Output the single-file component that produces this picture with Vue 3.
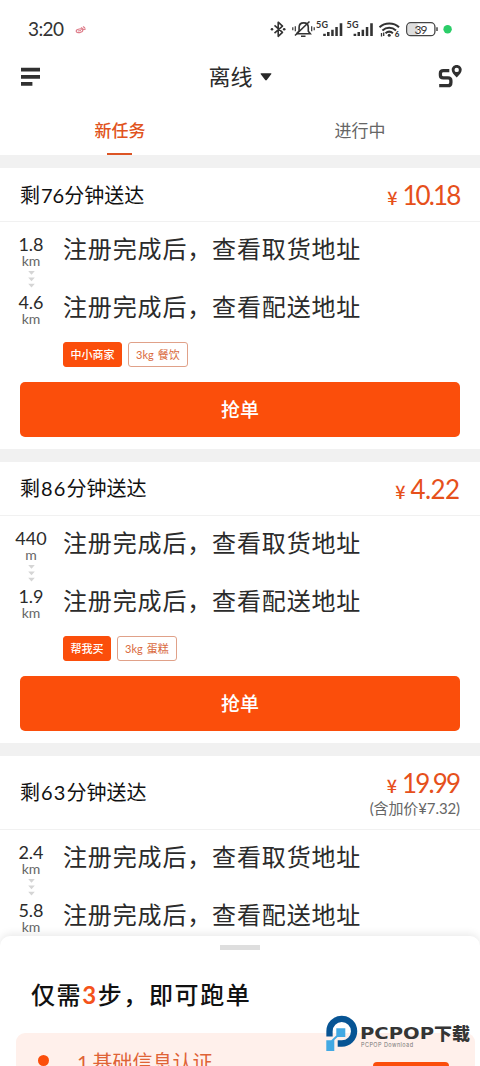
<script setup>
const cards = [
  {
    digits: '76', spacing: '0px', price: '10.18', priceSpacing: '-1.9px',
    stops: [{ n: '1.8', unit: 'km', text: '注册完成后，查看取货地址' }, { n: '4.6', unit: 'km', text: '注册完成后，查看配送地址' }],
    tag: '中小商家', goods: '餐饮',
  },
  {
    digits: '86', spacing: '1.2px', price: '4.22', priceSpacing: '-0.6px',
    stops: [{ n: '440', unit: 'm', text: '注册完成后，查看取货地址' }, { n: '1.9', unit: 'km', text: '注册完成后，查看配送地址' }],
    tag: '帮我买', goods: '蛋糕',
  },
  {
    digits: '63', spacing: '1.2px', price: '19.99', priceSpacing: '-1.8px', extra: '7.32',
    stops: [{ n: '2.4', unit: 'km', text: '注册完成后，查看取货地址' }, { n: '5.8', unit: 'km', text: '注册完成后，查看配送地址' }],
  },
]
</script>

<template>
  <main class="screen">
    <div class="status">
      <span class="time">3:20</span>
      <svg class="doodle" width="12" height="10" viewBox="0 0 12 10" fill="none" stroke="#df7f8c" stroke-width="1.2">
        <ellipse cx="4.5" cy="5.8" rx="3.3" ry="1.8" transform="rotate(-10 4.5 5.8)" />
        <path d="M3 6l3-.5M6 2.5l2.5 2M8 1.5l2 1.5M8.5 4.7l2.2-.8" />
      </svg>
      <svg class="indicators" width="190" height="24" viewBox="0 0 190 24">
        <g fill="none" stroke="#333" stroke-width="1.6" stroke-linejoin="round">
          <path d="M4.5 8.3l8 7-4.3 4V5.2l4.3 4-8 7" />
        </g>
        <circle cx="2" cy="12.2" r="1.3" fill="#333" /><circle cx="14.2" cy="12.2" r="1.3" fill="#333" />
        <g fill="none" stroke="#333" stroke-width="1.6">
          <path d="M26.5 16.8h13.8l-2-2.6V10.5c0-3-1.8-4.6-4.6-4.6-3 0-4.6 1.8-4.6 4.6v3.5l-2.6 2.8M31 19.3h4.5" />
          <path d="M39.5 4.5L25 18.5" />
          <path d="M25.3 9.3v5M22.8 10.3v3M41.7 9.3v5M44.2 10.3v3" stroke-width="1.2" />
        </g>
        <g fill="#333" font-family="Lato, sans-serif" font-weight="700" font-size="9">
          <text x="46" y="10.6" textLength="12">5G</text>
          <text x="76.5" y="10.6" textLength="12">5G</text>
        </g>
        <g fill="#333">
          <path d="M53.2 16.8h2.6v2.2h-2.6zM57 15h2.6v4H57zM61.2 12.8h2.5V19h-2.5zM65.3 10h2.5v9h-2.5zM69.7 6.3h2.6V19h-2.6z" />
          <path d="M83.6 16.8h2.6v2.2h-2.6zM87.5 15h2.5v4h-2.5zM91.6 12.8h2.5V19h-2.5zM95.8 10h2.5v9h-2.5zM100.2 6.3h2.6V19h-2.6z" />
        </g>
        <g fill="none" stroke="#333" stroke-width="2">
          <path d="M109.5 10.3c5.4-5 14.2-5 19.5 0M112.4 13.4c4-3.6 9.7-3.6 13.6 0M115.5 16.3c2.3-2 5.2-2 7.4 0" />
        </g>
        <circle cx="119.2" cy="18.2" r="1.5" fill="#333" />
        <path d="M111.5 16v3.5M113.7 15.5V19" stroke="#333" stroke-width="1.3" />
        <text x="124.8" y="20" font-family="Lato, sans-serif" font-weight="900" font-size="8" fill="#333">6</text>
        <rect x="138" y="6.5" width="10" height="12" rx="2" fill="#dedede" />
        <rect x="136.7" y="5.7" width="28.2" height="13" rx="4" fill="none" stroke="#444" stroke-width="1.3" />
        <path d="M167 10.3v3.8" stroke="#444" stroke-width="1.5" />
        <text x="144.5" y="16.6" textLength="13" font-family="Lato, sans-serif" font-size="12" fill="#333">39</text>
        <circle cx="177.6" cy="12.2" r="4.2" fill="#2bcd68" />
      </svg>
    </div>

    <header class="topbar">
      <svg width="20" height="20" viewBox="0 0 20 20" fill="#303030"><path d="M0 .8h19v3.8H0zM0 7.9h19v3.8H0zM0 14.9h11.4v3.8H0z" /></svg>
      <div class="mode"><span>离线</span>
        <svg width="12" height="8" viewBox="0 0 12 8" fill="#292929"><path d="M1.2.3h9.6q1.2 0 .4 1L6.8 7q-.8.9-1.6 0L.8 1.3Q0 .3 1.2.3z" /></svg>
      </div>
      <svg width="25" height="25" viewBox="0 0 25 25">
        <path d="M11.3 5.7H5.3Q2.4 5.7 2.4 8.3v1.9q0 2.7 2.9 2.7h4.7q2.9 0 2.9 2.9v1.6q0 3.3-3.1 3.3H1.2" fill="none" stroke="#303030" stroke-width="3.3" />
        <path d="M18.7 0c-3 0-5 2.2-5 4.8 0 2.9 2.5 5.1 5 7.8 2.6-2.7 5-4.9 5-7.8 0-2.6-2-4.8-5-4.8zM18.7 2.7a2.2 2.2 0 1 1 0 4.4 2.2 2.2 0 0 1 0-4.4z" fill="#303030" fill-rule="evenodd" />
      </svg>
    </header>

    <nav class="tabs"><span class="tab active">新任务</span><span class="tab">进行中</span></nav>

    <section v-for="card in cards" :key="card.digits" class="card">
      <div class="head" :class="{ tall: card.extra }">
        <div class="deadline">剩<b :style="{ letterSpacing: card.spacing }">{{ card.digits }}</b>分钟送达</div>
        <div class="money">
          <div class="price"><span class="yen">¥</span><span :style="{ letterSpacing: card.priceSpacing }">{{ card.price }}</span></div>
          <div v-if="card.extra" class="extra">(含加价¥{{ card.extra }})</div>
        </div>
      </div>
      <div class="route">
        <div v-for="(stop, i) in card.stops" :key="i" class="stop">
          <div class="distance">
            <div class="num">{{ stop.n }}</div>
            <div class="unit">{{ stop.unit }}</div>
            <svg v-if="i === 0" width="7" height="18" viewBox="0 0 7 18" fill="#d5d5d5"><path d="M.2 1h6.6L3.5 4.8zM.2 7.4h6.6L3.5 11.2zM.2 13.8h6.6L3.5 17.6z" /></svg>
          </div>
          <div class="address">{{ stop.text }}</div>
        </div>
      </div>
      <template v-if="card.tag">
        <div class="tags"><span class="tag solid">{{ card.tag }}</span><span class="tag"><i>3kg</i>{{ card.goods }}</span></div>
        <button class="grab">抢单</button>
      </template>
    </section>

    <section class="sheet">
      <div class="handle"></div>
      <h2>仅需<em>3</em>步，即可跑单</h2>
      <div class="step"><span class="dot"></span><span class="label"><i>1</i>基础信息认证</span><span class="go"></span></div>
      <div class="brand">
        <svg width="32" height="37" viewBox="0 0 32 37">
          <path d="M3.5 21.6V16.3a12.3 12.3 0 1 1 12.2 12.2H11.7" fill="none" stroke="#075494" stroke-width="6.3" />
          <path d="M10.3 13.2h9v8.9h-7.7L8.3 25v11H.3V25.2h5l5-4.7z" fill="#43a9e3" />
        </svg>
        <svg class="wordmark" width="116" height="34" viewBox="0 -10 116 34" font-family="'DejaVu Sans', 'Noto Sans CJK SC', sans-serif">
          <text x="0" y="13.5" textLength="74" lengthAdjust="spacingAndGlyphs" font-size="16" font-weight="700" fill="#353535">PCPOP</text>
          <text x="74" y="14.5" textLength="36" lengthAdjust="spacingAndGlyphs" font-size="17.5" font-weight="900" font-family="'Noto Sans CJK SC', sans-serif" fill="#353535">下载</text>
          <text x="1" y="22" textLength="52" font-size="5.5" font-family="Inter, sans-serif" fill="#777">PCPOP Download</text>
        </svg>
      </div>
    </section>
  </main>
</template>

<style>
body { background: #fff; }
</style>

<style scoped>
* { box-sizing: border-box; }
.screen { position: relative; width: 480px; height: 1066px; overflow: hidden; background: #fff; color: #2b2b2b; font-family: Lato, "Noto Sans CJK SC", sans-serif; }
.status { height: 56px; display: flex; align-items: flex-start; padding: 17px 20px 0 28px; }
.time { width: 47px; font-size: 19px; line-height: 24px; letter-spacing: -.6px; color: #333; }
.doodle { margin-top: 8px; }
.indicators { margin-left: auto; }
.topbar { height: 50px; padding: 0 17px 8px 21px; display: flex; align-items: center; justify-content: space-between; }
.mode { display: flex; align-items: center; gap: 7px; font-size: 22px; line-height: 30px; padding-left: 1px; }
.tabs { height: 49px; display: flex; }
.tab { flex: 1; position: relative; text-align: center; font-size: 17px; line-height: 49px; color: #666; }
.tab.active { color: #e15320; font-weight: 500; }
.tab.active::after { content: ""; position: absolute; left: 107px; top: 47px; width: 25px; height: 2px; background: #dc5424; }
.card { border-top: 13px solid #f1f1f1; height: 293.8px; }
.head { display: flex; justify-content: space-between; align-items: center; height: 54px; padding: 0 20px; border-bottom: 1px solid #f1f1f1; }
.head.tall { height: 74px; }
.deadline { font-size: 20px; line-height: 28px; color: #111; font-weight: 400; white-space: nowrap; }
.deadline b { font-weight: 400; font-size: 20px; padding-left: 1px; }
.money { text-align: right; padding-top: 1px; }
.price { font-size: 26px; line-height: 30px; color: #e6501b; white-space: nowrap; }
.price > span:last-child { margin-right: .6px; }
.yen { font-size: 18px; font-weight: 500; font-family: "Noto Sans CJK SC", sans-serif; line-height: 1; margin-right: 5px; }
.extra { font-size: 15px; line-height: 19px; color: #666; letter-spacing: -.1px; margin-top: 1px; }
.head.tall .money { padding-top: 1px; }
.route { padding-top: 11px; height: 120px; }
.stop { display: flex; height: 58px; }
.distance { width: 62px; padding-top: 1px; text-align: center; display: flex; flex-direction: column; align-items: center; }
.num { font-size: 18px; line-height: 20px; }
.unit { font-size: 14px; line-height: 13px; color: #666; }
.distance svg { margin-top: 3px; }
.address { font-size: 24px; line-height: 31px; letter-spacing: .85px; margin-left: 1px; white-space: nowrap; }
.tags { display: flex; gap: 6px; padding-left: 63px; height: 40px; }
.tag { height: 25px; border: 1px solid #e0a189; border-radius: 3px; padding: 0 7px; font-size: 11px; line-height: 23px; color: #d96a40; white-space: nowrap; }
.tag i { font-style: normal; margin-right: 4px; }
.tag.solid { padding: 0 6.5px; background: #fb4e0b; border-color: #fb4e0b; color: #fff; font-weight: 500; }
.grab { display: block; width: 440px; height: 55px; margin: 0 20px; border: 0; border-radius: 5px; background: #fb4e0b; color: #fff; font: 500 19px/54px "Noto Sans CJK SC", sans-serif; padding: 0 0 1px; }
.sheet { position: absolute; left: 0; right: 0; top: 936px; height: 130px; background: #fff; border-radius: 10px 10px 0 0; box-shadow: 0 -2px 8px rgba(0, 0, 0, .09); padding-top: 9px; }
.handle { width: 40px; height: 5px; margin: 0 auto; background: #dedede; }
h2 { margin: 27px 0 0 31px; font-size: 24px; line-height: 36px; font-weight: 500; letter-spacing: 1.6px; color: #111; white-space: nowrap; }
h2 em { font-style: normal; font-weight: 700; color: #f4531b; }
.step { margin: 20px 5px 0 16px; height: 40px; border-radius: 9px; background: #fff0eb; display: flex; padding-left: 22px; }
.dot { width: 11px; height: 11px; border-radius: 50%; background: #fb4e0b; margin-top: 22px; }
.label { margin: 14px 0 0 28px; font-size: 20px; line-height: 30px; color: #df6336; white-space: nowrap; }
.label i { font-style: normal; margin-right: 4px; }
.go { width: 76px; height: 20px; border-radius: 4px; background: #fb4e0b; margin: 29px 26px 0 auto; }
.brand { position: absolute; left: 326px; top: 79px; display: flex; }
.wordmark { margin: 0 0 0 2px; }
</style>
